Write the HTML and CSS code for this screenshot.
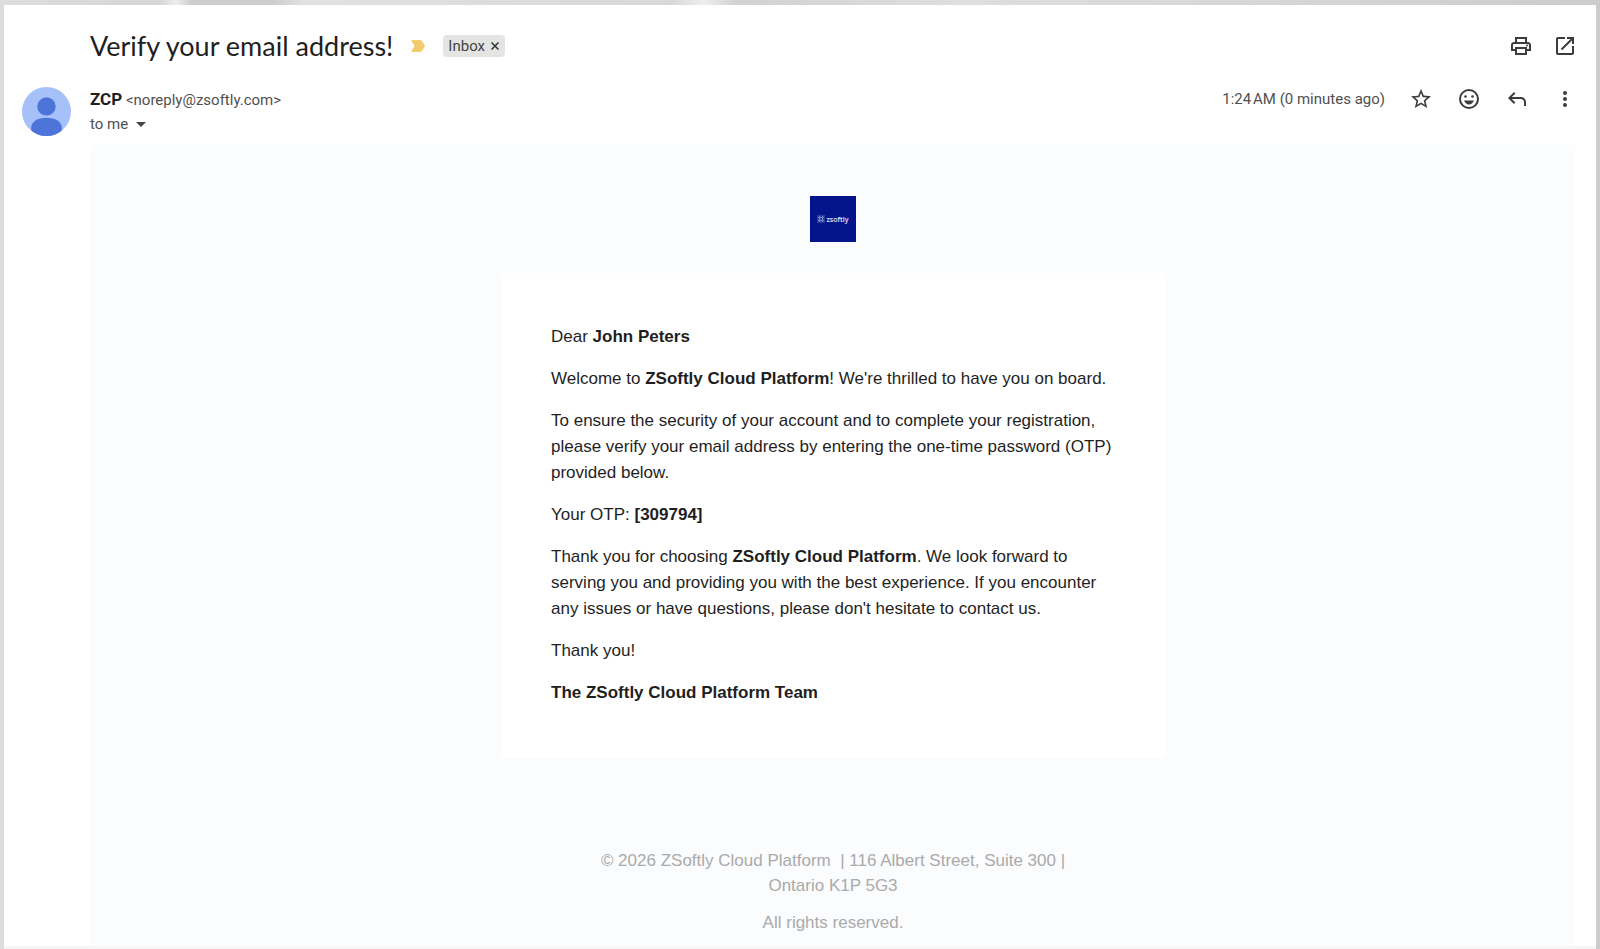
FILE: index.html
```
<!DOCTYPE html>
<html lang="en">
<head>
  <meta charset="UTF-8">
  <title>Verify your email address!</title>
  <link rel="stylesheet" href="styles.css">
</head>
<body>

<main class="mail">
  <header class="subject-row">
    <h1>Verify your email address!</h1>
    <svg class="marker" width="14" height="12" viewBox="0 0 14 12" aria-hidden="true">
      <path fill="#f2cb6c" d="M1 0h8q1 0 2 1l3 5-3 5q-1 1-2 1H1q-1 0-.5-1L3.500 6 .5 1Q0 0 1 0z"/>
    </svg>
    <div class="label">
      <span>Inbox</span>
      <button type="button" aria-label="Remove label">
        <svg width="8" height="8" viewBox="0 0 8 8"><path d="M.5.5l7 7M7.500.5l-7 7" stroke="#333" stroke-width="1.500"/></svg>
      </button>
    </div>
    <div class="actions">
      <button type="button" aria-label="Print">
        <svg viewBox="0 0 24 24"><path d="M19 8h-1V3H6v5H5c-1.660 0-3 1.340-3 3v6h4v4h12v-4h4v-6c0-1.660-1.340-3-3-3zM8 5h8v3H8V5zm8 12v2H8v-4h8v2zm2-2v-2H6v2H4v-4c0-.55.45-1 1-1h14c.55 0 1 .45 1 1v4h-2z"/><circle cx="18" cy="11.500" r="1"/></svg>
      </button>
      <button type="button" aria-label="Open in new window">
        <svg viewBox="0 0 24 24"><path d="M19 19H5V5h7V3H5c-1.110 0-2 .9-2 2v14c0 1.100.89 2 2 2h14c1.100 0 2-.9 2-2v-7h-2v7zM14 3v2h3.590l-9.830 9.830 1.410 1.410L19 6.410V10h2V3h-7z"/></svg>
      </button>
    </div>
  </header>

  <section class="sender-row">
    <svg class="avatar" viewBox="0 0 48 48" role="img" aria-label="Profile picture">
      <clipPath id="avatarClip"><circle cx="24" cy="24" r="24"/></clipPath>
      <g clip-path="url(#avatarClip)">
        <rect width="48" height="48" fill="#a6c1fa"/>
        <circle cx="24" cy="19" r="9" fill="#4d74d8"/>
        <path fill="#4d74d8" d="M9 48V40c0-6 6-10 15-10s15 4 15 10v8z"/>
      </g>
    </svg>
    <div class="sender">
      <div><strong>ZCP</strong> <span class="address">&lt;noreply@zsoftly.com&gt;</span></div>
      <div class="recipient">to me
        <button type="button" aria-label="Show details">
          <svg width="10" height="5" viewBox="0 0 10 5"><path d="M0 0h10L5 5z" fill="#444"/></svg>
        </button>
      </div>
    </div>
    <div class="actions">
      <time>1:24&#8239;AM (0 minutes ago)</time>
      <button type="button" aria-label="Star">
        <svg viewBox="0 0 24 24"><path d="M22 9.240l-7.190-.62L12 2 9.190 8.630 2 9.240l5.460 4.730L5.820 21 12 17.270 18.180 21l-1.630-7.030L22 9.240zM12 15.400l-3.760 2.270 1-4.280-3.320-2.880 4.380-.38L12 6.100l1.710 4.040 4.380.38-3.320 2.880 1 4.280L12 15.400z"/></svg>
      </button>
      <button type="button" aria-label="Add reaction">
        <svg viewBox="0 0 24 24"><circle cx="12" cy="12" r="9" fill="none" stroke="#3c3c3c" stroke-width="2"/><circle cx="8.500" cy="9.500" r="1.300"/><circle cx="15.500" cy="9.500" r="1.300"/><path d="M7 13.500h10c-.8 2.300-2.700 4-5 4s-4.200-1.700-5-4z"/></svg>
      </button>
      <button type="button" aria-label="Reply">
        <svg viewBox="0 0 24 24"><path d="M19 19v-4c0-1.660-1.340-3-3-3H6.830l3.580 3.590L9 17l-6-6 6-6 1.410 1.410L6.830 10H16c2.760 0 5 2.240 5 5v4h-2z"/></svg>
      </button>
      <button type="button" aria-label="More">
        <svg viewBox="0 0 24 24"><circle cx="12" cy="6" r="2"/><circle cx="12" cy="12" r="2"/><circle cx="12" cy="18" r="2"/></svg>
      </button>
    </div>
  </section>

  <article class="message">
    <div class="logo">
      <svg width="8" height="8" viewBox="0 0 8 8" aria-hidden="true">
        <rect width="8" height="8" fill="#2a3d9c"/>
        <path d="M1 2.500h6M1 5.500h6M2.500 1v6M5.500 1v6" stroke="#7484c8"/>
      </svg>
      <span>zsoftly</span>
    </div>

    <div class="card">
      <p>Dear <strong>John Peters</strong></p>
      <p>Welcome to <strong>ZSoftly Cloud Platform</strong>! We're thrilled to have you on board.</p>
      <p>To ensure the security of your account and to complete your registration, please verify your email address by entering the one-time password (OTP) provided below.</p>
      <p>Your OTP: <strong>[309794]</strong></p>
      <p>Thank you for choosing <strong>ZSoftly Cloud Platform</strong>. We look forward to serving you and providing you with the best experience. If you encounter any issues or have questions, please don't hesitate to contact us.</p>
      <p>Thank you!</p>
      <p><strong>The ZSoftly Cloud Platform Team</strong></p>
    </div>

    <footer>
      <p>© 2026 ZSoftly Cloud Platform &nbsp;| 116 Albert Street, Suite 300 | Ontario K1P 5G3</p>
      <p>All rights reserved.</p>
    </footer>
  </article>
</main>

</body>
</html>
```
FILE: styles.css
```
* {
  box-sizing: border-box;
}
body {
  margin: 0;
  padding: 5px 4px 0;
  background: linear-gradient(90deg, #dcdddf 0%, #d6d6d6 10%, #ededed 11%, #cdcdcd 12%, #cdcdcd 17%, #e0e1e3 19%, #d8d8d8 42%, #eeeeee 44%, #d2d2d2 46%, #dedede 60%, #d6d6d6 80%, #cccccc 100%);
  color: #1f1f1f;
  font-family: Roboto, Arial, sans-serif;
}
p,
h1 {
  margin: 0;
}
button {
  display: flex;
  padding: 0;
  border: 0;
  background: none;
  cursor: pointer;
}
.mail {
  background: #fff;
  border-bottom: 3px solid #f6f6f6;
}
.subject-row {
  display: flex;
  align-items: center;
  height: 82px;
  padding: 0 19px 0 86px;
}
h1 {
  font-family: Lato, sans-serif;
  font-size: 27px;
  font-weight: 400;
  line-height: 36px;
}
.marker {
  margin: 0 18px;
}
.label {
  display: flex;
  align-items: center;
  gap: 6px;
  height: 22px;
  padding: 0 6px 0 5px;
  border-radius: 4px;
  background: #e4e4e2;
  color: #444;
  font-size: 15px;
}
.actions {
  display: flex;
  gap: 24px;
  margin-left: auto;
}
.subject-row .actions {
  gap: 20px;
}
.actions svg {
  width: 24px;
  height: 24px;
  fill: #3c3c3c;
}
.sender-row {
  display: flex;
  align-items: flex-start;
  height: 58px;
  padding: 0 19px 0 18px;
}
.avatar {
  width: 49px;
  height: 49px;
  margin-right: 19px;
}
.sender {
  color: #505050;
  font-size: 15px;
  line-height: 24px;
}
.sender strong {
  color: #1f1f1f;
  font-size: 17px;
}
.recipient {
  display: flex;
  align-items: center;
  gap: 8px;
}
time {
  color: #505050;
  font-size: 15px;
  line-height: 24px;
}
.message {
  margin: 0 21px 0 87px;
  padding: 51px 0 11px;
  background: #fbfcfe;
  font-family: "Liberation Sans", Arial, sans-serif;
  font-size: 17px;
  line-height: 25px;
}
.logo {
  display: flex;
  align-items: center;
  justify-content: center;
  gap: 1px;
  width: 46px;
  height: 46px;
  margin: 0 auto 31px;
  background: #04148a;
  color: #e4e8f8;
  font-family: "Open Sans", sans-serif;
  font-size: 7px;
  font-weight: 600;
}
.card {
  max-width: 664px;
  margin: 0 auto;
  padding: 51px 50px 52px;
  background: #fff;
  line-height: 26px;
}
.card p + p {
  margin-top: 16px;
}
footer {
  max-width: 664px;
  margin: 0 auto;
  padding: 90px 95px 0;
  color: #aaa;
  text-align: center;
}
footer p + p {
  margin-top: 12px;
}
```
